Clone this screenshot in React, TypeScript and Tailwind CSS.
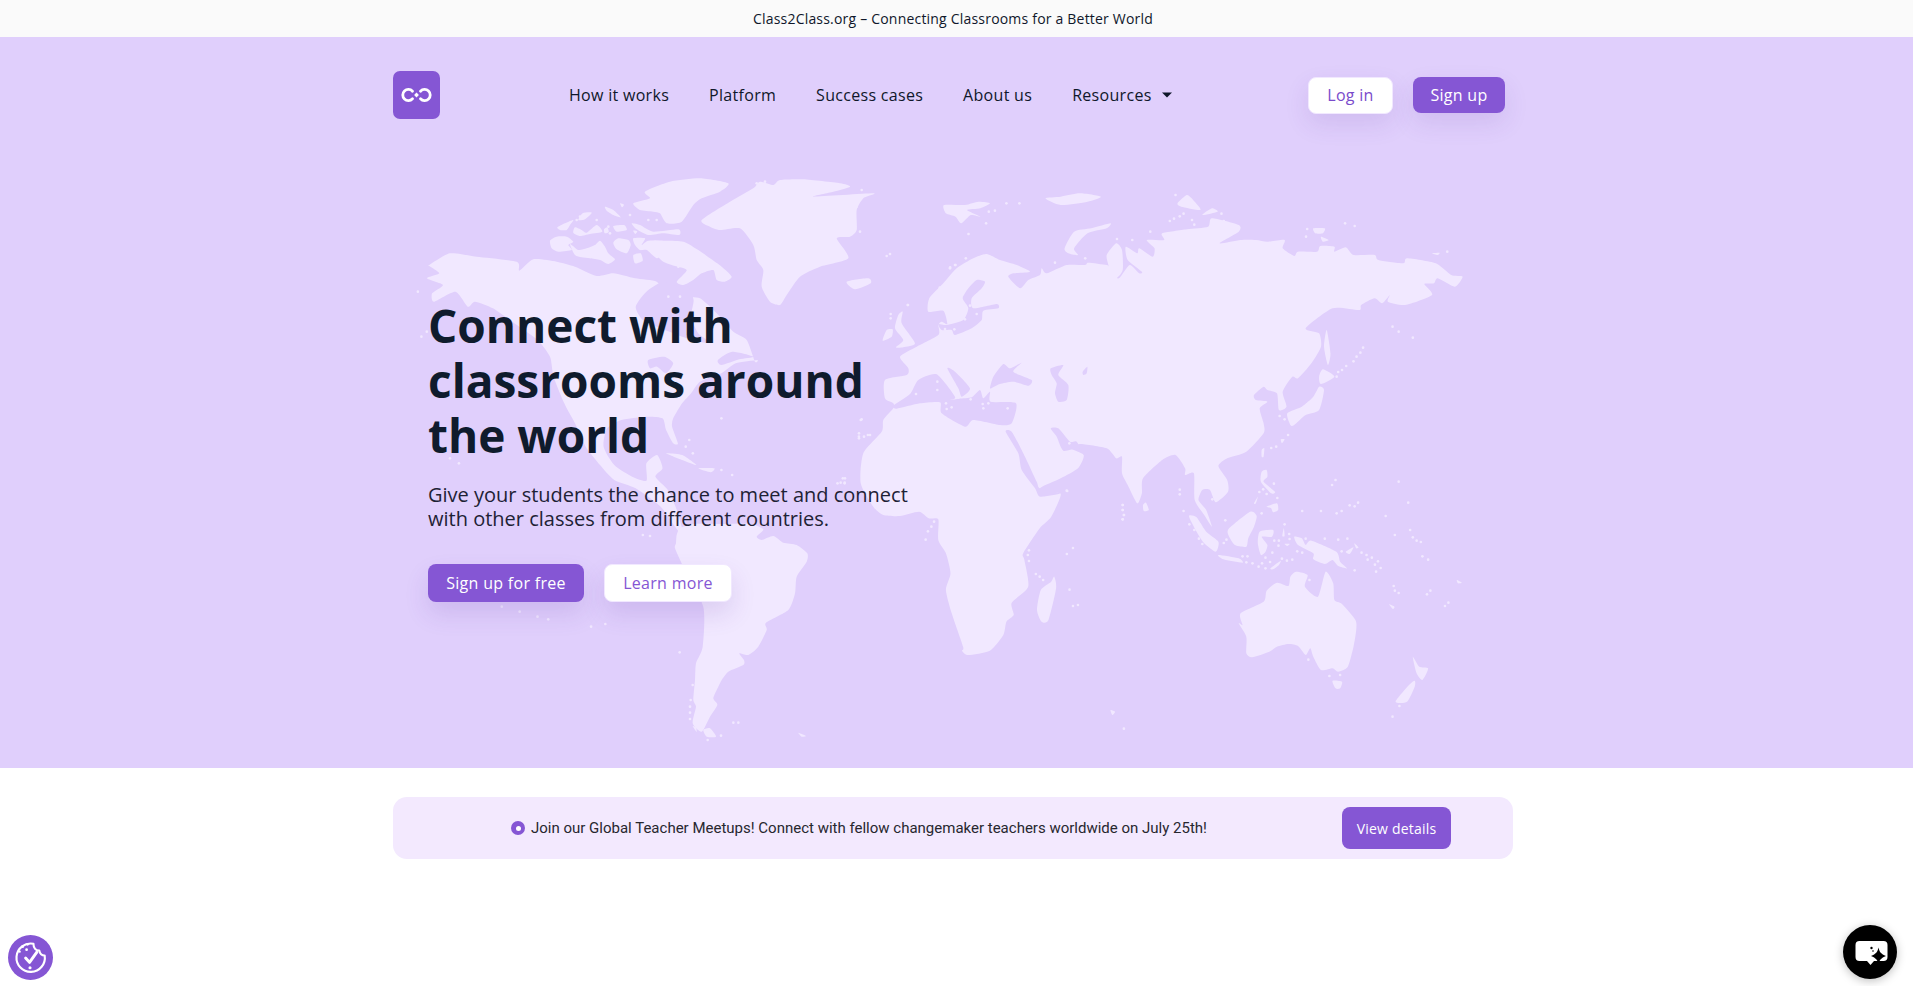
import React from 'react';

type Zone = [number, number, number, number];
type Pt = [number, number];

// traced coastline coordinates, each zone is a region of the map with its own scale
const Z3: Zone = [400, 160, 2.8, 3];
const Z4: Zone = [900, 160, 2.613, 3];
const Z5: Zone = [900, 440, 2.613, 3];
const Z10: Zone = [660, 520, 3, 3];
const Z11: Zone = [840, 240, 3, 3];
const Z12: Zone = [400, 170, 3, 3];

const pts = (z: Zone, s: string): Pt[] =>
  s.trim().split(/\s+/).map((p) => {
    const [x, y] = p.split(',').map(Number);
    return [z[0] + x / z[2], z[1] + y / z[3]] as Pt;
  });

// closed curve through every traced point
const smooth = (p: Pt[]) => {
  const n = p.length;
  const k = 0.11;
  let d = `M${p[0][0].toFixed(1)} ${p[0][1].toFixed(1)}`;
  for (let i = 0; i < n; i++) {
    const a = p[(i - 1 + n) % n];
    const b = p[i];
    const c = p[(i + 1) % n];
    const e = p[(i + 2) % n];
    d += `C${(b[0] + (c[0] - a[0]) * k).toFixed(1)} ${(b[1] + (c[1] - a[1]) * k).toFixed(1)} ${(c[0] - (e[0] - b[0]) * k).toFixed(1)} ${(c[1] - (e[1] - b[1]) * k).toFixed(1)} ${c[0].toFixed(1)} ${c[1].toFixed(1)}`;
  }
  return d + 'Z';
};

const northAmerica = [
  ...pts(Z12, '88,285 150,250 230,260 350,275 358,302 400,268 470,275 525,290 590,318 640,310 705,325 770,335 795,370 850,380 900,385 950,430 1000,485 1040,510 1065,575'),
  ...pts(Z3, '1000,600 940,610 900,640 840,665 815,700 790,730 765,775 762,800 778,850 765,850 745,810 735,775 690,770 620,780 580,805 570,860 600,915 650,950 690,962 690,910 720,885 735,925 715,950 750,990 775,1050 795,1130 770,1100 730,1040 660,985 600,960 560,915 520,860 490,790 460,730 430,650 420,590 385,540 320,490 260,445 210,425 190,440 155,395 95,425 90,400 120,375 75,355 110,340 82,318'),
];

const southAmerica = pts(Z10, '48,70 45,85 70,140 130,260 128,380 108,430 105,480 100,540 108,560 98,610 125,635 150,590 172,555 160,535 175,500 185,480 205,455 250,435 252,420 238,400 265,405 295,380 320,330 318,308 385,270 405,220 410,170 440,125 442,100 410,75 370,68 340,48 305,60 290,50 310,28 270,12 180,12 100,12 60,25 50,45');

const eurasiaAfrica = [
  ...pts(Z11, '135,420 200,405 205,385 180,350 230,320 295,285 295,255 305,245 322,252 310,212 265,215 268,175 310,130 350,85 400,55 440,42 480,60 530,75 570,95 520,100 505,110 540,145 565,120 600,105 605,85 620,100 680,75 735,75 745,68 800,75'),
  ...pts(Z4, '545,318 540,285 565,250 580,270 582,330 565,355 550,340 572,355 600,315 625,340 632,335 595,300 590,260 620,280 625,265 660,290 665,265 645,240 690,240 685,220 750,208 805,200 815,175 885,195 885,215 835,250 890,240 930,240 960,245 1005,240 1000,265 1030,288 1040,275 1090,275 1098,258 1135,260 1135,275 1165,262 1185,285 1240,285 1250,300 1315,310 1325,295 1400,310 1440,345 1470,350 1450,380 1405,355 1395,370 1370,372 1390,405 1320,435 1275,425 1280,405 1260,430 1240,415 1205,435 1200,450 1130,445 1060,505 1095,520 1100,560 1075,610 1040,655 1025,650 1000,695 1010,740 990,750 985,700 960,690 950,680 925,705 930,720 960,725 940,745 950,790 950,820'),
  ...pts(Z5, '905,35 855,55 832,78 855,120 857,155 825,187 810,150 790,150 780,180 800,210 815,260 795,225 770,180 768,100 745,105 745,85 720,45 685,60 635,115 632,160 620,190 595,135 580,100 580,50 565,55 540,25 470,12 445,25 480,45 465,85 420,115 367,143 375,155 420,162 395,230 365,265 322,340 325,360 335,440 292,488 297,525 278,545 270,585 235,632 178,645 162,632 165,620 135,520 120,450 132,400 120,340 100,300 100,238 75,235 50,215 0,228'),
  ...pts(Z11, '130,825 100,800 62,730 70,640 125,575 130,540 160,505 160,490 135,475'),
];

const seas = [
  // hudson bay, great lakes, st lawrence
  pts(Z3, '660,440 690,395 735,365 775,380 805,378 822,420 815,470 835,520 870,548 835,545 790,530 730,505 680,480'),
  pts(Z3, '695,600 740,590 765,610 745,640 720,620 700,625'),
  pts(Z3, '890,600 930,575 990,590 950,598 900,615'),
  // baltic
  pts(Z11, '410,120 435,125 425,145 395,175 400,205 470,192 475,205 430,212 425,240 395,265 345,285 335,270 305,270 295,252 320,255 370,240 385,205 368,175 385,145'),
  // mediterranean
  pts(Z11, '160,497 210,462 235,420 290,403 345,470 330,480 358,476 395,472 420,450 430,475 450,455 452,485 528,490 515,550 480,555 400,540 375,560 305,520 300,487 240,490 170,506'),
  pts(Z11, '322,385 345,395 390,445 365,470 355,445'),
  // black sea
  pts(Z11, '450,445 460,410 490,372 510,385 545,368 520,395 575,420 565,437 520,425 480,432 462,440'),
  // caspian, aral
  pts(Z11, '632,385 670,375 655,405 685,435 680,480 655,485 645,460 650,430 635,405'),
  pts(Z11, '728,395 742,380 740,400 730,405'),
  // red sea and persian gulf
  pts(Z11, '497,575 515,575 550,640 590,725 600,745 660,760 600,770 585,745 545,690 535,640'),
  pts(Z11, '632,565 655,565 690,605 710,605 735,650 715,625 670,632 650,590'),
];

const islands = [
  // arctic canada
  pts(Z12, '450,212 470,200 500,200 520,215 505,225 515,240 475,245 455,235'),
  pts(Z12, '510,222 535,240 560,235 585,225 600,212 615,230 625,250 645,268 625,282 600,270 570,265 545,262 525,255'),
  pts(Z12, '472,172 495,160 520,150 510,165 500,180 480,180'),
  pts(Z12, '525,172 545,180 560,188 590,165 607,185 570,192 540,198 520,188'),
  pts(Z12, '548,130 575,128 555,148 535,150'),
  pts(Z12, '615,110 640,120 662,142 640,135 620,122'),
  pts(Z12, '655,205 685,210 692,225 680,250 650,238 640,218'),
  pts(Z12, '700,205 735,205 725,225 745,212 785,215 785,250 770,265 740,240 720,240 705,225'),
  pts(Z12, '755,215 790,212 850,215 895,240 930,265 965,290 995,320 975,335 950,330 940,300 905,310 880,330 850,345 830,335 860,300 815,285 790,275 770,255'),
  pts(Z12, '700,255 722,250 728,272 705,280'),
  pts(Z12, '695,160 720,165 760,185 835,178 838,195 790,190 745,195 710,178'),
  pts(Z12, '700,100 750,85 735,65 810,35 900,25 985,40 960,65 905,85 880,105 845,155 800,160 780,130 760,125 720,120'),
  pts(Z12, '905,150 990,95 1060,55 1080,35 1120,45 1140,30 1210,28 1320,40 1350,50 1300,65 1240,80 1420,70 1390,85 1370,120 1370,180 1350,200 1310,205 1345,265 1260,290 1200,320 1160,375 1140,405 1110,395 1085,350 1090,300 1070,270 1060,225 1020,175 960,180 930,170'),
  pts(Z12, '640,168 672,165 680,180 650,185'),
  pts(Z12, '612,178 622,172 626,186 614,190'),
  pts(Z12, '700,182 712,184 706,192'),
  pts(Z12, '660,100 672,104 666,112'),
  // caribbean
  pts(Z3, '745,880 790,885 830,915 790,900'),
  pts(Z3, '835,925 880,925 870,937'),
  // europe
  pts(Z11, '20,125 85,115 92,130 45,148'),
  pts(Z11, '175,225 188,215 185,250 225,310 190,322 168,322 190,300 165,265'),
  pts(Z11, '128,302 140,270 158,268 155,290'),
  // arctic russia
  pts(Z4, '115,135 170,135 205,125 235,130 210,145 175,150 210,170 185,165 160,190 145,170 120,160'),
  pts(Z4, '380,115 420,110 470,100 525,110 490,125 420,135'),
  pts(Z4, '430,265 455,215 500,205 550,190 540,205 490,220 455,265 465,285 440,280'),
  pts(Z4, '725,130 750,105 770,125 785,150 735,140'),
  pts(Z4, '790,165 815,145 830,155'),
  pts(Z4, '1080,205 1110,205 1105,220 1085,220'),
  pts(Z4, '1100,230 1120,240 1105,245'),
  pts(Z4, '1390,280 1410,278 1405,285'),
  // east asia
  pts(Z4, '1115,510 1125,580 1118,615 1108,560'),
  pts(Z4, '1095,650 1105,628 1135,650 1100,672'),
  pts(Z4, '1012,760 1050,740 1080,710 1095,680 1108,690 1095,750 1060,765 1030,795 1020,795'),
  pts(Z4, '945,870 952,865 950,890 945,890'),
  pts(Z4, '995,838 1005,838 998,850'),
  pts(Z5, '945,95 958,90 960,110 950,125 980,155 970,160 943,125'),
  pts(Z5, '958,200 985,190 988,210 975,217 970,205'),
  pts(Z5, '635,195 643,188 650,210 637,213'),
  pts(Z5, '755,228 775,232 800,275 832,305 825,335 795,310 775,275'),
  pts(Z5, '832,345 885,355 895,368 845,358'),
  pts(Z5, '860,265 915,215 932,228 925,260 910,295 905,320 875,315 858,285'),
  pts(Z5, '940,275 975,270 972,290 945,290 960,315 955,335 943,345 935,310'),
  pts(Z5, '1030,290 1050,295 1060,315 1075,302 1140,335 1150,365 1168,385 1145,378 1130,360 1110,372 1080,358 1080,340 1040,315'),
  pts(Z5, '968,385 995,362 990,375 975,388'),
  pts(Z5, '1165,335 1185,322 1175,342'),
  pts(Z5, '1187,310 1198,322 1192,325'),
  pts(Z5, '925,190 935,170 930,190'),
  pts(Z5, '1003,265 1005,288 999,288'),
  // oceania
  pts(Z5, '890,520 950,485 958,452 985,428 1015,438 1020,410 1035,395 1065,405 1058,440 1092,470 1112,395 1132,430 1135,480 1155,492 1190,540 1192,570 1185,620 1170,680 1145,695 1130,685 1100,690 1080,650 1072,625 1060,645 1040,618 1015,612 985,620 965,635 920,652 905,640 905,590 885,550 895,555'),
  pts(Z5, '1130,722 1155,725 1150,745 1138,745'),
  pts(Z5, '1340,650 1357,680 1380,685 1365,720 1350,700'),
  pts(Z5, '1295,785 1330,735 1345,722 1345,740 1325,785'),
  pts(Z5, '403,410 408,445 388,540 370,545 358,510 368,450 395,425'),
  pts(Z5, '550,810 562,815 555,825'),
  pts(Z5, '1278,493 1292,500 1288,507'),
  pts(Z5, '1455,420 1468,428 1458,430'),
  pts(Z5, '1005,312 1018,312 1012,318'),
  // south atlantic
  pts(Z10, '130,630 150,625 168,650 140,650'),
  pts(Z10, '415,638 438,648 425,650'),
  pts(Z10, '98,618 108,622 110,636'),
];

const dots = [
  ...pts(Z5, '437,153 731,149 731,163 582,195 582,210 585,225 582,238 741,213 756,253 769,270 781,296 790,312 850,241 853,299 846,309 816,178 89,245 82,260 73,274 67,299 337,331 334,345 337,363 452,324 436,342 355,402 365,410 374,420 443,449 452,498 465,495 1303,125 1328,188 1138,120 1129,135 1269,228 1333,270 1340,292 1350,302 1361,306 1293,285 1365,349 1380,359 1100,213 1141,220 1154,213 1175,196 1188,199 1197,188 1051,213 1005,253 1017,282 1018,297 1060,296 1110,296 1145,299 1169,296 978,302 990,302 989,317 973,338 1038,334 1051,338 1154,334 1206,338 1219,345 1233,353 1222,359 1249,364 1241,374 1256,384 1244,395 1188,391 1290,438 1293,452 1303,459 1386,452 1377,463 1433,488 1424,498 1070,420 1067,659 1122,708 1150,705 1305,798 1287,830 585,866 955,353 967,366 998,356 1011,362 1025,359 937,380 955,385 905,367 895,349 908,349 946,370 921,370 977,131 986,174 958,162 949,148 939,156 945,220'),
  ...pts(Z4, '278,130 312,130 248,152 232,155 225,190 179,222 720,105 705,183 716,176 731,169 741,161 763,180 769,194 840,161 846,183 654,215 567,237 607,240 1064,207 1061,230 1163,190 1188,198 1430,275 1287,500 1303,515 1340,533 1210,563 1203,578 1193,590 1185,604 1166,618 1155,630 1145,636 1141,650 992,768 1005,778 1014,825 970,864 983,860 20,435 405,308 484,295 172,295 145,315 131,322 104,383'),
  ...pts(Z3, '50,395 75,515 60,530 140,895 165,910 810,840 800,860 820,880 900,930 930,945 1240,955 1225,970 1245,970 680,1125 700,1128 1285,830 1310,825 1290,780 900,775 285,1340 335,1355 385,1370 415,1378 535,1400 575,1392'),
  ...pts(Z10, '59,397 98,495 92,540 90,560 90,578 90,597 183,647 143,660 220,608 235,608'),
  ...pts(Z11, '300,145 345,75 330,85 152,222 152,235 204,195 65,538 57,580 72,590 90,585 57,595 15,715 2,728 14,728 140,48 150,42 292,425 292,450 228,462 318,490 320,507 335,502 428,492 445,490 503,505 430,505 392,478 315,267 343,268 375,238 390,197 410,222 688,610 680,752 848,795 848,810 852,825 848,838'),
  ...pts(Z12, '530,150 540,140 590,150 625,170 630,190 690,135 745,150 770,150 1095,35 1070,40 1385,60 1370,110 1380,185 835,290 860,290 840,380 805,380'),
];

function WorldMap() {
  return (
    <svg className="absolute left-0 top-0 h-[731px] w-[1913px]" viewBox="0 37 1913 731" aria-hidden="true">
      <g fill="#f1e8ff">
        <path d={smooth(northAmerica)} />
        <path d={smooth(southAmerica)} />
        <path d={smooth(eurasiaAfrica)} />
      </g>
      <g fill="#e0cffc">
        {seas.map((s, i) => (
          <path key={i} d={smooth(s)} />
        ))}
      </g>
      <g fill="#f1e8ff">
        {islands.map((s, i) => (
          <path key={i} d={smooth(s)} />
        ))}
        {dots.map((d, i) => (
          <circle key={i} cx={d[0]} cy={d[1]} r="1.3" />
        ))}
      </g>
    </svg>
  );
}

function Logo() {
  return (
    <div className="flex h-[48px] w-[47px] items-center justify-center rounded-[7px] bg-[#8556d4]">
      <svg width="33" height="16" viewBox="0 0 33 16" fill="none" aria-hidden="true">
        <path d="M12.5 4.2A5.6 5.6 0 1 0 12.5 11.8" stroke="#fff" strokeWidth="2.8" strokeLinecap="round" />
        <path d="M20.5 4.2A5.6 5.6 0 1 1 20.5 11.8" stroke="#fff" strokeWidth="2.8" strokeLinecap="round" />
        <path d="M16.5 5.6L18.9 8L16.5 10.4L14.1 8Z" fill="#fff" />
      </svg>
    </div>
  );
}

function CookieBadge() {
  return (
    <div className="fixed bottom-[6px] left-[8px] flex h-[45px] w-[45px] items-center justify-center rounded-full bg-[#8556d4]">
      <svg width="45" height="45" viewBox="0 0 46 46" fill="none" aria-hidden="true">
        <path d="M26 9A14.5 14.5 0 1 0 37.5 21C34.5 21 32.5 19 32 16C28.5 16 26 13 26 9Z" stroke="#fff" strokeWidth="2.2" strokeLinejoin="round" />
        <path d="M18 23.5L22 28L29.5 17.5" stroke="#fff" strokeWidth="3" strokeLinecap="round" strokeLinejoin="round" />
        <circle cx="22.5" cy="33.5" r="1.6" fill="#fff" />
        <circle cx="20" cy="9.5" r="1.4" fill="#fff" />
        <circle cx="15" cy="12" r="1.4" fill="#fff" />
        <circle cx="19" cy="15" r="1.4" fill="#fff" />
        <circle cx="12" cy="17" r="1.1" fill="#fff" />
      </svg>
    </div>
  );
}

function ChatBadge() {
  return (
    <div className="fixed bottom-[7px] right-[16px] flex h-[54px] w-[54px] items-center justify-center rounded-full bg-black shadow-[0_2px_10px_rgba(0,0,0,0.25)]">
      <svg width="54" height="54" viewBox="0 0 54 54" aria-hidden="true">
        <path d="M16.5 16H40.5A4 4 0 0 1 44.5 20V32A4 4 0 0 1 40.5 36H31L27.5 40L24 36H16.5A4 4 0 0 1 12.5 32V20A4 4 0 0 1 16.5 16Z" fill="#fff" />
        <path d="M35.5 22.5C36.5 27 38 29 43 31C38 33 36.5 35 35.5 39.5C34.5 35 33 33 28 31C33 29 34.5 27 35.5 22.5Z" fill="#000" />
        <circle cx="28.5" cy="23" r="1.2" fill="#000" />
        <circle cx="30" cy="26" r="0.8" fill="#000" />
      </svg>
    </div>
  );
}

const navItems = ['How it works', 'Platform', 'Success cases', 'About us'];

export default function App() {
  return (
    <div className="min-h-[986px] overflow-hidden bg-white font-['Open_Sans',sans-serif] text-[#0f172a]">
      {/* Top strip */}
      <div className="flex h-[37px] items-center justify-center bg-[#fafafa] pr-[7px] text-[14px] font-medium tracking-[0.2px]">
        Class2Class.org – Connecting Classrooms for a Better World
      </div>

      {/* Hero */}
      <section className="relative h-[731px] bg-[#e0cffc] pr-[7px]">
        <WorldMap />
        <div className="relative mx-auto w-[1120px]">
          <header className="flex items-center pt-[34px]">
            <Logo />
            <nav className="ml-[129px] flex items-center gap-[40px] text-[16px] font-medium tracking-[0.3px]">
              {navItems.map((item) => (
                <a key={item} href="#">
                  {item}
                </a>
              ))}
              <a href="#" className="flex items-center gap-[10px]">
                Resources
                <svg width="10" height="6" viewBox="0 0 10 6" aria-hidden="true">
                  <path d="M0 0.5H10L5 5.5Z" fill="#0f172a" />
                </svg>
              </a>
            </nav>
            <div className="ml-auto mr-[8px] flex items-center gap-[20px] text-[16px] font-medium tracking-[0.3px]">
              <a href="#" className="flex h-[37px] w-[85px] items-center justify-center rounded-[8px] border border-[#f1e8ff] bg-white text-[#7a4bcb] shadow-[0_10px_24px_rgba(90,50,160,0.12)]">
                Log in
              </a>
              <a href="#" className="flex h-[36px] w-[92px] items-center justify-center rounded-[8px] bg-[#8556d4] text-white shadow-[0_10px_24px_rgba(90,50,160,0.12)]">
                Sign up
              </a>
            </div>
          </header>

          <div className="pl-[35px] pt-[179px]">
            <h1 className="text-[46px] font-bold leading-[55px] text-[#0f1b2d]">
              Connect with
              <br />
              classrooms around
              <br />
              the world
            </h1>
            <p className="mt-[20px] text-[20px] leading-[24px] text-[#1e2235]">
              Give your students the chance to meet and connect
              <br />
              with other classes from different countries.
            </p>
            <div className="mt-[33px] flex gap-[20px] text-[16px] font-medium tracking-[0.3px]">
              <a href="#" className="flex h-[38px] w-[156px] items-center justify-center rounded-[8px] bg-[#8556d4] text-white shadow-[0_12px_24px_rgba(90,50,160,0.14)]">
                Sign up for free
              </a>
              <a href="#" className="flex h-[38px] w-[128px] items-center justify-center rounded-[8px] border border-[#f1e8ff] bg-white text-[#8556d4] shadow-[0_12px_24px_rgba(90,50,160,0.14)]">
                Learn more
              </a>
            </div>
          </div>
        </div>
      </section>

      {/* Meetup banner */}
      <div className="pr-[7px] pt-[29px]">
        <div className="mx-auto flex h-[62px] w-[1120px] items-center rounded-[14px] bg-[#f3e9fe] pl-[118px] pr-[62px]">
          <span className="flex h-[14px] w-[14px] items-center justify-center rounded-full bg-[#8556d4]">
            <span className="h-[5px] w-[5px] rounded-full bg-white" />
          </span>
          <span className="ml-[6px] font-['Roboto',sans-serif] text-[15px] text-[#27272f]">
            Join our Global Teacher Meetups! Connect with fellow changemaker teachers worldwide on July 25th!
          </span>
          <a href="#" className="ml-auto flex h-[42px] w-[109px] items-center justify-center rounded-[8px] bg-[#8556d4] text-[14px] font-medium tracking-[0.2px] text-white">
            View details
          </a>
        </div>
      </div>

      <CookieBadge />
      <ChatBadge />
    </div>
  );
}
